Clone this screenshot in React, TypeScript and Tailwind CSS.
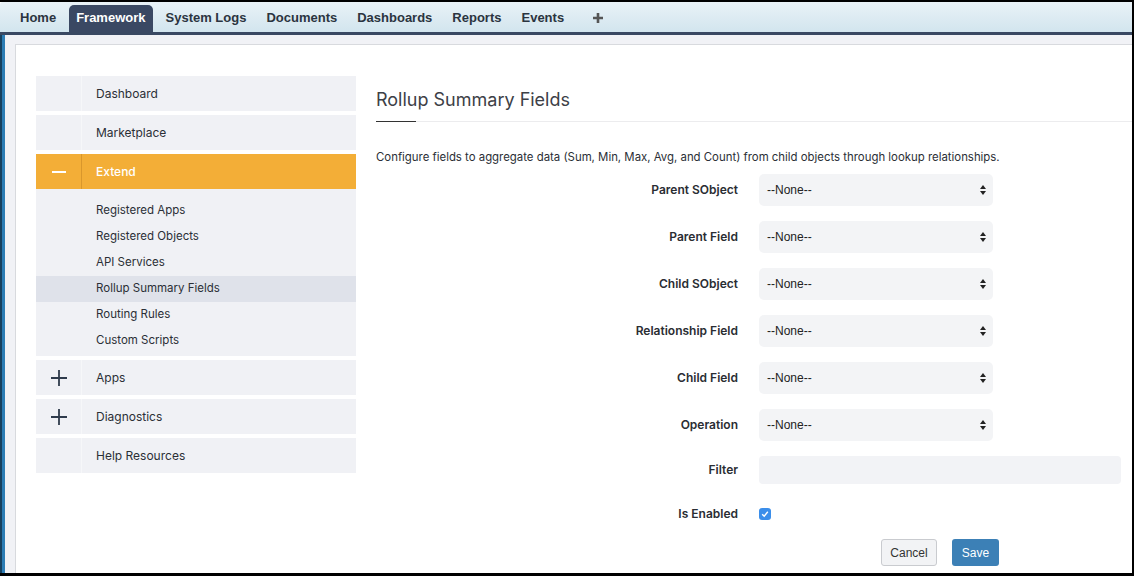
import React from "react";

const tabs = ["Home", "Framework", "System Logs", "Documents", "Dashboards", "Reports", "Events"];

const subItems = [
  "Registered Apps",
  "Registered Objects",
  "API Services",
  "Rollup Summary Fields",
  "Routing Rules",
  "Custom Scripts",
];

const selectFields = [
  "Parent SObject",
  "Parent Field",
  "Child SObject",
  "Relationship Field",
  "Child Field",
  "Operation",
];

function PlusIcon() {
  return (
    <svg width="16" height="16" viewBox="0 0 16 16">
      <path d="M8 0v16M0 8h16" stroke="#2f3b4c" strokeWidth="1.8" />
    </svg>
  );
}

function SideItem({ label, icon }: { label: string; icon?: React.ReactNode }) {
  return (
    <div className="flex h-[35px] mb-[4px] bg-[#f0f1f5]">
      <div className="w-[46px] flex items-center justify-center border-r border-[#f6f7f9]">{icon}</div>
      <div className="flex items-center pl-[14px] text-[12px] text-[#2b2f36]">{label}</div>
    </div>
  );
}

function SelectBox() {
  return (
    <div className="w-[234px] h-[32px] rounded-[5px] bg-[#f3f4f6] flex items-center justify-between pl-[8px] pr-[7px] font-['Liberation_Sans',sans-serif] text-[12px] text-[#222]">
      <span>--None--</span>
      <svg width="6" height="10" viewBox="0 0 6 10">
        <path d="M3 0L6 4H0z M3 10L0 6h6z" fill="#222" />
      </svg>
    </div>
  );
}

function FormRow({ label, children, h }: { label: string; children: React.ReactNode; h: string }) {
  return (
    <div className={`flex items-center ${h}`}>
      <div className="w-[362px] text-right text-[12px] font-semibold text-[#2a2d33]">{label}</div>
      <div className="ml-[21px] flex-1 flex items-center">{children}</div>
    </div>
  );
}

export default function App() {
  return (
    <div className="w-[1134px] h-[576px] bg-black pt-[2px] pr-[2px] pb-[3px] overflow-hidden font-['Inter',sans-serif]">
      <div className="h-full flex flex-col bg-white">
        {/* top nav */}
        <div className="h-[30px] bg-gradient-to-b from-[#e9f2f7] to-[#d2e5ee] flex items-end pl-[13px] gap-[6px] rounded-tl-[3px] font-['Liberation_Sans',sans-serif] text-[13px] font-bold">
          {tabs.map((t) => (
            <div
              key={t}
              className={`h-[27px] pb-[2px] px-[7px] flex items-center rounded-t-[5px] ${
                t === "Framework" ? "bg-[#3a4863] text-white" : "text-[#2b3440]"
              }`}
            >
              {t}
            </div>
          ))}
          <div className="h-[27px] pb-[2px] pl-[16px] flex items-center">
            <svg width="10" height="10" viewBox="0 0 10 10">
              <path d="M5 0v10M0 5h10" stroke="#555" strokeWidth="2.6" />
            </svg>
          </div>
        </div>
        <div className="h-[3px] bg-[#394862]" />

        <div className="flex-1 flex min-h-0">
          <div className="w-[2px] bg-[#17415f]" />
          <div className="w-[3px] bg-[#2c7db5]" />
          <div className="flex-1 flex flex-col bg-[#f1f2f6] pt-[9px] pl-[10px] min-w-0">
            <div className="flex-1 flex bg-white border-t border-l border-[#d8dade] min-h-0">
              {/* sidebar */}
              <div className="w-[320px] ml-[20px] mt-[31px]">
                <SideItem label="Dashboard" />
                <SideItem label="Marketplace" />
                <div className="mb-[4px]">
                  <div className="flex h-[35px] bg-[#f3ae37]">
                    <div className="w-[46px] flex items-center justify-center border-r border-[#d9972c]">
                      <div className="w-[14px] h-[2px] bg-white" />
                    </div>
                    <div className="flex items-center pl-[14px] text-[12px] text-white font-medium">Extend</div>
                  </div>
                  <div className="bg-[#f0f1f5] pt-[9px] pb-[2px]">
                    {subItems.map((s) => (
                      <div
                        key={s}
                        className={`h-[26px] flex items-center pl-[60px] text-[11.5px] text-[#2b2f36] ${
                          s === "Rollup Summary Fields" ? "bg-[#dfe2ea]" : ""
                        }`}
                      >
                        {s}
                      </div>
                    ))}
                  </div>
                </div>
                <SideItem label="Apps" icon={<PlusIcon />} />
                <SideItem label="Diagnostics" icon={<PlusIcon />} />
                <SideItem label="Help Resources" />
              </div>

              {/* content */}
              <div className="flex-1 ml-[20px] pt-[44px] min-w-0">
                <h1 className="text-[18px] text-[#3d4046] leading-[22px]">Rollup Summary Fields</h1>
                <div className="mt-[10px] h-[1px] bg-[#ececee] relative">
                  <div className="absolute left-0 top-0 w-[40px] h-[1px] bg-[#333]" />
                </div>
                <p className="mt-[27px] text-[11.4px] text-[#2b2f36] leading-[16px]">
                  Configure fields to aggregate data (Sum, Min, Max, Avg, and Count) from child objects through lookup
                  relationships.
                </p>
                <div className="mt-[9px]">
                  {selectFields.map((f) => (
                    <FormRow key={f} label={f} h="h-[32px] mb-[15px]">
                      <SelectBox />
                    </FormRow>
                  ))}
                  <FormRow label="Filter" h="h-[28px] mt-[1px]">
                    <div className="w-[362px] h-[28px] rounded-[4px] bg-[#f2f3f6]" />
                  </FormRow>
                  <FormRow label="Is Enabled" h="h-[14px] mt-[23px]">
                    <div className="w-[12px] h-[12px] rounded-[3px] bg-[#3b8eea] flex items-center justify-center">
                      <svg width="8" height="8" viewBox="0 0 8 8">
                        <path d="M1.2 4.2L3.2 6.2L6.8 1.8" stroke="white" strokeWidth="1.4" fill="none" />
                      </svg>
                    </div>
                  </FormRow>
                  <div className="flex mt-[18px] ml-[505px] gap-[15px] font-['Liberation_Sans',sans-serif] text-[12px]">
                    <button className="h-[27px] w-[56px] rounded-[3px] border border-[#c9cbcf] bg-[#f2f3f5] text-[#333]">
                      Cancel
                    </button>
                    <button className="h-[27px] w-[47px] rounded-[3px] bg-[#3c80b6] text-white">Save</button>
                  </div>
                </div>
              </div>
            </div>
          </div>
        </div>
      </div>
    </div>
  );
}
